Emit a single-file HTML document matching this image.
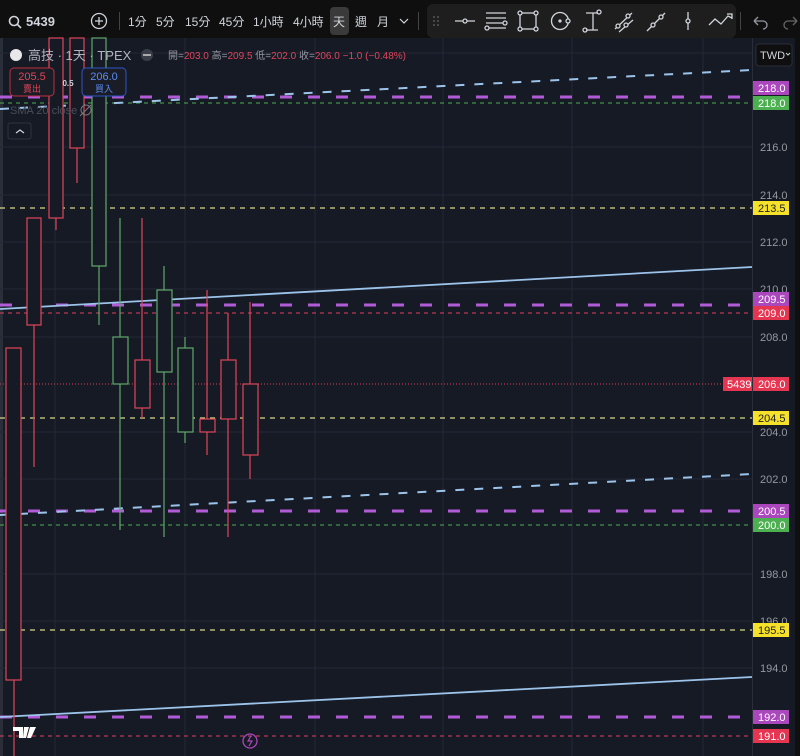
<!DOCTYPE html>
<html><head><meta charset="utf-8"><style>
body{margin:0;background:#0f0f0f;width:800px;height:756px;overflow:hidden;font-family:"Liberation Sans","Noto Sans CJK TC",sans-serif}
svg{display:block}
text{font-family:"Liberation Sans","Noto Sans CJK TC",sans-serif}
</style></head><body>
<svg width="800" height="756" xmlns="http://www.w3.org/2000/svg">
<rect x="0" y="0" width="800" height="756" fill="#0f0f0f"/>
<!-- top toolbar -->
<g fill="#d1d4dc" font-size="12">
<circle cx="14" cy="21" r="4.5" fill="none" stroke="#d1d4dc" stroke-width="1.6"/><line x1="17.5" y1="24.5" x2="21" y2="28" stroke="#d1d4dc" stroke-width="1.6"/>
<text x="26" y="26" font-weight="bold" font-size="13">5439</text>
<circle cx="99" cy="21" r="7.5" fill="none" stroke="#d1d4dc" stroke-width="1.3"/><path d="M95 21h8M99 17v8" stroke="#d1d4dc" stroke-width="1.3"/>
<rect x="119" y="12" width="1" height="18" fill="#444"/>
<text x="128" y="26">1分</text><text x="156" y="26">5分</text><text x="185" y="26">15分</text><text x="219" y="26">45分</text><text x="253" y="26">1小時</text><text x="293" y="26">4小時</text>
<rect x="330" y="7" width="19" height="28" rx="4" fill="#3a3a3a"/>
<text x="333" y="26">天</text><text x="355" y="26">週</text><text x="377" y="26">月</text>
<path d="M400 19l4 4 4-4" fill="none" stroke="#d1d4dc" stroke-width="1.2"/>
<rect x="418" y="12" width="1" height="18" fill="#444"/>
</g>
<rect x="427" y="4" width="309" height="34" rx="6" fill="#1e1e1e"/>
<g fill="none" stroke="#d1d4dc" stroke-width="1.3">
<g fill="#555" stroke="none"><circle cx="434" cy="17" r="1"/><circle cx="438" cy="17" r="1"/><circle cx="434" cy="21" r="1"/><circle cx="438" cy="21" r="1"/><circle cx="434" cy="25" r="1"/><circle cx="438" cy="25" r="1"/></g>
<path d="M455 21h8M467 21h8"/><circle cx="465" cy="21" r="2"/>
<path d="M486 13h20M486 18h20M486 23h17M489 28h17"/><circle cx="505" cy="23" r="2"/><circle cx="487" cy="28" r="2"/>
<rect x="520" y="13" width="16" height="16"/><circle cx="520" cy="13" r="2" fill="#1e1e1e"/><circle cx="536" cy="13" r="2" fill="#1e1e1e"/><circle cx="520" cy="29" r="2" fill="#1e1e1e"/><circle cx="536" cy="29" r="2" fill="#1e1e1e"/>
<circle cx="560" cy="21" r="8.5"/><circle cx="560" cy="21" r="1" fill="#d1d4dc"/><circle cx="568" cy="21" r="2" fill="#1e1e1e"/>
<path d="M586 13h12M586 30h12M593 13v17"/><circle cx="599" cy="12" r="2"/><circle cx="585" cy="30" r="2"/>
<path d="M615 29l17-16M619 32l14-12"/><circle cx="618" cy="26" r="2" fill="#1e1e1e"/><circle cx="628" cy="16" r="2" fill="#1e1e1e"/><circle cx="626" cy="25" r="2" fill="#1e1e1e"/>
<path d="M647 31l18-18"/><circle cx="653" cy="25" r="2" fill="#1e1e1e"/><circle cx="661" cy="17" r="2" fill="#1e1e1e"/>
<path d="M688 12v18"/><circle cx="688" cy="21" r="2" fill="#1e1e1e"/>
<path d="M709 25l6-6 6 5 7-8 4 2"/><path d="M727 14h5v5"/>
</g>
<rect x="740" y="12" width="1" height="18" fill="#444"/>
<path d="M754 21h9a4 4 0 0 1 0 8M754 21l4-4M754 21l4 4" fill="none" stroke="#9598a1" stroke-width="1.3"/>
<path d="M797 21h-9a4 4 0 0 0 0 8M797 21l-4-4M797 21l-4 4" fill="none" stroke="#666" stroke-width="1.3"/>

<!-- chart bg -->
<rect x="0" y="38" width="800" height="718" fill="#161a25"/>
<rect x="0" y="38" width="3" height="718" fill="#2a2e39"/>
<g stroke="#242836" stroke-width="1">
<path d="M55 38V756M185 38V756M315 38V756M443 38V756M572 38V756M703 38V756"/>
<path d="M0 53H752M0 147H752M0 195H752M0 242H752M0 289H752M0 337H752M0 432H752M0 479H752M0 574H752M0 621H752M0 668H752"/>
</g>
<rect x="752" y="38" width="1" height="718" fill="#2a2e39"/>

<!-- horizontal levels -->
<g fill="none">
<path d="M0 97H752" stroke="#b15cd6" stroke-width="3" stroke-dasharray="12 16"/>
<path d="M0 103H752" stroke="#4caf50" stroke-width="1" stroke-dasharray="4 4"/>
<path d="M0 208H752" stroke="#d6d68a" stroke-width="1.3" stroke-dasharray="5 5"/>
<path d="M0 305H752" stroke="#b15cd6" stroke-width="3" stroke-dasharray="12 16"/>
<path d="M0 313H752" stroke="#e0405a" stroke-width="1" stroke-dasharray="4 4"/>
<path d="M0 384H752" stroke="#e0405a" stroke-width="1" stroke-dasharray="1 2"/>
<path d="M0 418H752" stroke="#d6d68a" stroke-width="1.3" stroke-dasharray="5 5"/>
<path d="M0 511H752" stroke="#b15cd6" stroke-width="3" stroke-dasharray="12 16"/>
<path d="M0 525H752" stroke="#4caf50" stroke-width="1" stroke-dasharray="4 4"/>
<path d="M0 630H752" stroke="#d6d68a" stroke-width="1.3" stroke-dasharray="5 5"/>
<path d="M0 717H752" stroke="#b15cd6" stroke-width="3" stroke-dasharray="12 16"/>
<path d="M0 736H752" stroke="#e0405a" stroke-width="1" stroke-dasharray="4 4"/>
<path d="M0 109L752 70" stroke="#9cc4ea" stroke-width="2" stroke-dasharray="9 10"/>
<path d="M0 515L752 474" stroke="#9cc4ea" stroke-width="2" stroke-dasharray="9 10"/>
<path d="M0 309L752 267" stroke="#9cc4ea" stroke-width="1.8"/>
<path d="M0 717L752 677" stroke="#9cc4ea" stroke-width="1.8"/>
</g>

<!-- candles -->
<g fill="none" stroke-width="1.2">
<g stroke="#e0455a">
<path d="M14 348V756"/><rect x="6" y="348" width="15" height="332" fill="#161a25"/>
<path d="M34 218V467"/><rect x="27" y="218" width="14" height="107" fill="#161a25"/>
<path d="M56 38V230"/><rect x="49" y="38" width="14" height="180" fill="#161a25"/>
<path d="M77 38V183"/><rect x="70" y="38" width="14" height="110" fill="#161a25"/>
<path d="M142 218V418"/><rect x="135" y="360" width="15" height="48" fill="#161a25"/>
<path d="M207 290V455"/><rect x="200" y="419" width="15" height="13" fill="#161a25"/>
<path d="M228 313V537"/><rect x="221" y="360" width="15" height="59" fill="#161a25"/>
<path d="M250 302V479"/><rect x="243" y="384" width="15" height="71" fill="#161a25"/>
</g>
<g stroke="#5fa86a">
<path d="M99 38V325"/><rect x="92" y="38" width="14" height="228" fill="#161a25"/>
<path d="M120 218V530"/><rect x="113" y="337" width="15" height="47" fill="#161a25"/>
<path d="M164 266V537"/><rect x="157" y="290" width="15" height="82" fill="#161a25"/>
<path d="M185 337V443"/><rect x="178" y="348" width="15" height="84" fill="#161a25"/>
</g>
</g>

<!-- legend -->
<circle cx="16" cy="55" r="6" fill="#e8e8e8"/>
<text x="28" y="60" font-size="13" fill="#b2b5be">高技 · 1天 · TPEX</text>
<circle cx="147" cy="55" r="6" fill="#3a3e4a"/><rect x="143" y="54" width="8" height="2" fill="#aaa"/>
<text x="168" y="59" font-size="10" fill="#9598a1">開=<tspan fill="#e0455a">203.0</tspan> 高=<tspan fill="#e0455a">209.5</tspan> 低=<tspan fill="#e0455a">202.0</tspan> 收=<tspan fill="#e0455a">206.0</tspan> <tspan fill="#e0455a">−1.0 (−0.48%)</tspan></text>
<rect x="10" y="68" width="44" height="28" rx="4" fill="#1a1d26" stroke="#c0303f"/>
<text x="32" y="80" font-size="11" fill="#e0455a" text-anchor="middle">205.5</text>
<text x="32" y="92" font-size="9" fill="#e0455a" text-anchor="middle">賣出</text>
<text x="68" y="86" font-size="8" fill="#d1d4dc" text-anchor="middle" font-weight="bold">0.5</text>
<rect x="82" y="68" width="44" height="28" rx="4" fill="#1a1d26" stroke="#2f55c8"/>
<text x="104" y="80" font-size="11" fill="#5b8cf0" text-anchor="middle">206.0</text>
<text x="104" y="92" font-size="9" fill="#5b8cf0" text-anchor="middle">買入</text>
<text x="10" y="114" font-size="11" fill="#4a4e5a">SMA 20 close</text>
<circle cx="86" cy="110" r="5" fill="none" stroke="#777" stroke-width="1"/><path d="M80 116l11-11" stroke="#777"/>
<rect x="8" y="123" width="23" height="16" rx="2" fill="#161a25" stroke="#2f3341"/>
<path d="M16 133l4-3 4 3" fill="none" stroke="#d1d4dc" stroke-width="1.2"/>

<!-- TWD -->
<rect x="756" y="44" width="36" height="22" rx="3" fill="#0f0f0f" stroke="#2a2e39"/>
<text x="760" y="59" font-size="11" fill="#d1d4dc">TWD</text><path d="M786 53l2 2 2-2" fill="none" stroke="#d1d4dc"/>

<!-- axis labels -->
<g font-size="11" fill="#9598a1">
<text x="760" y="151">216.0</text><text x="760" y="199">214.0</text><text x="760" y="246">212.0</text><text x="760" y="293">210.0</text><text x="760" y="341">208.0</text><text x="760" y="436">204.0</text><text x="760" y="483">202.0</text><text x="760" y="578">198.0</text><text x="760" y="625">196.0</text><text x="760" y="672">194.0</text>
</g>
<g font-size="11" fill="#fff">
<rect x="753" y="81" width="36" height="14" fill="#ab47bc"/><text x="758" y="92">218.0</text>
<rect x="753" y="96" width="36" height="14" fill="#4caf50"/><text x="758" y="107">218.0</text>
<rect x="753" y="201" width="36" height="14" fill="#f5e12a"/><text x="758" y="212" fill="#222">213.5</text>
<rect x="753" y="292" width="36" height="14" fill="#ab47bc"/><text x="758" y="303">209.5</text>
<rect x="753" y="306" width="36" height="14" fill="#e53550"/><text x="758" y="317">209.0</text>
<rect x="723" y="377" width="29" height="14" fill="#e53550"/><text x="727" y="388">5439</text>
<rect x="753" y="377" width="36" height="14" fill="#e53550"/><text x="758" y="388">206.0</text>
<rect x="753" y="411" width="36" height="14" fill="#f5e12a"/><text x="758" y="422" fill="#222">204.5</text>
<rect x="753" y="504" width="36" height="14" fill="#ab47bc"/><text x="758" y="515">200.5</text>
<rect x="753" y="518" width="36" height="14" fill="#4caf50"/><text x="758" y="529">200.0</text>
<rect x="753" y="623" width="36" height="14" fill="#f5e12a"/><text x="758" y="634" fill="#222">195.5</text>
<rect x="753" y="710" width="36" height="14" fill="#ab47bc"/><text x="758" y="721">192.0</text>
<rect x="753" y="729" width="36" height="14" fill="#e53550"/><text x="758" y="740">191.0</text>
</g>
<rect x="795" y="38" width="5" height="718" fill="#0f0f0f"/>

<!-- TV logo & bolt -->
<path d="M13 727h10v11h-4v-7h-6z M24 727h5l-3 11h-3z M30 727h6l-5 11h-4z" fill="#fff"/>
<circle cx="250" cy="741" r="7" fill="none" stroke="#ab47bc" stroke-width="1.3"/>
<path d="M251 736l-3 5h4l-3 5" fill="none" stroke="#ab47bc" stroke-width="1.2"/>
</svg>
</body></html>
